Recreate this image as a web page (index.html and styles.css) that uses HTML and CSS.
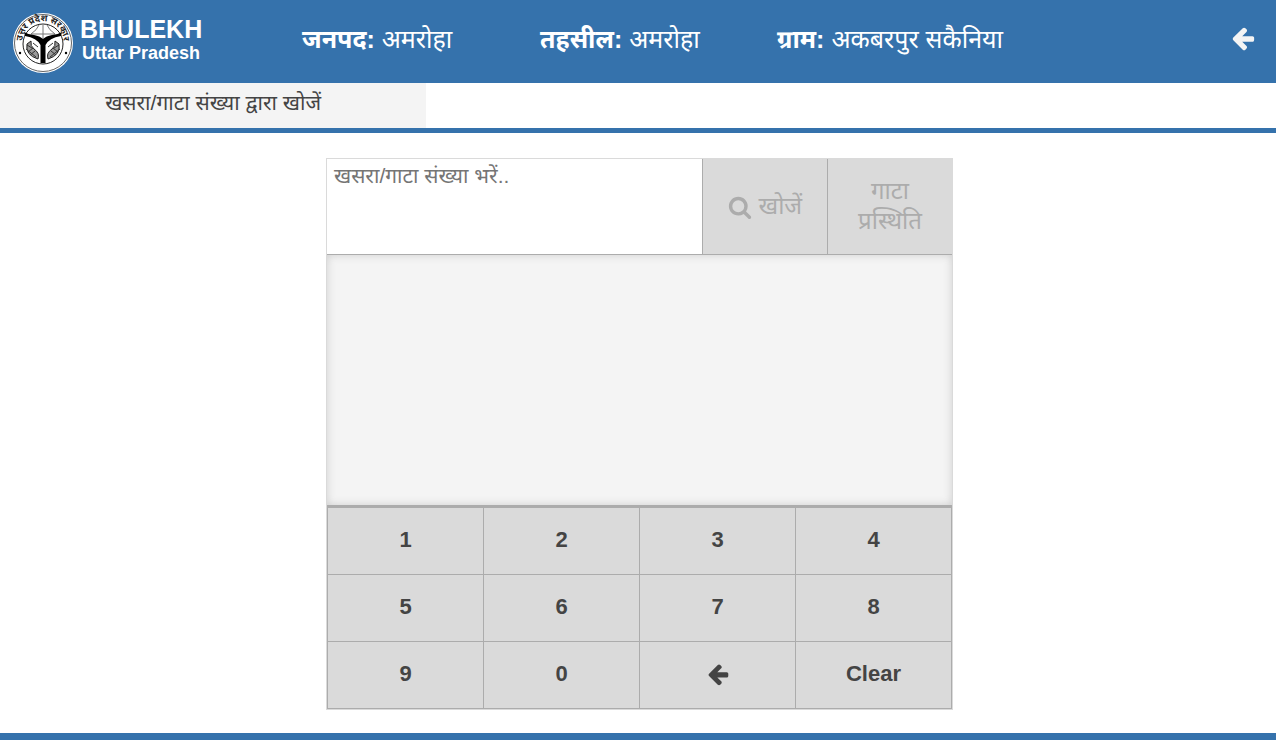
FILE: index.html
```html
<!DOCTYPE html>
<html lang="hi">
  <head>
    <meta charset="UTF-8" />
    <meta name="viewport" content="width=device-width, initial-scale=1.0" />
    <title>BHULEKH Uttar Pradesh</title>
    <link rel="stylesheet" href="styles.css">
  </head>
  <body>
    <header class="header">
      <div class="brand">
        <svg class="emblem" viewBox="0 0 60 60" aria-hidden="true">
          <defs>
            <path id="ring" d="M10.500 35A20.500 20.500 0 1 1 49.500 35" />
          </defs>
          <circle cx="30" cy="30" r="30" fill="#fff" />
          <circle cx="30" cy="30" r="28.500" fill="none" stroke="#666" stroke-width="1" />
          <text class="emblem-text"><textPath href="#ring" startOffset="50%" text-anchor="middle">उत्तर प्रदेश सरकार</textPath></text>
          <circle cx="30" cy="31" r="20" fill="none" stroke="#222" stroke-width="1" />
          <path d="M30 12v14M18 21Q24 17 26 12M42 21Q36 17 34 12M18 21h24" fill="none" stroke="#777" stroke-width="1" />
          <path d="M11 19Q16 22 21 22Q27 23 30 26Q33 23 39 22Q44 22 49 19L48 23Q36 25 32.500 32V50H27.500V32Q24 25 12 23Z" fill="#000" />
          <path d="M14 31Q12 42 25 46Q27 40 21 36Q17 33 18 28ZM46 31Q48 42 35 46Q33 40 39 36Q43 33 42 28Z" fill="#999" stroke="#222" stroke-width="1" />
          <path d="M13 36l10 8M47 36l-10 8M14 32l5 3M46 32l-5 3M17 42l5-4M43 42l-5-4M20 30l5 4M40 30l-5 4M15 39l5-4M45 39l-5-4" stroke="#333" stroke-width="1" />
          <circle cx="7" cy="40" r="1.200" />
          <circle cx="53" cy="40" r="1.200" />
        </svg>
        <div class="brand-text">
          <div class="brand-name">BHULEKH</div>
          <div class="brand-state">Uttar Pradesh</div>
        </div>
      </div>
      <div class="place"><b>जनपद:</b> अमरोहा</div>
      <div class="place"><b>तहसील:</b> अमरोहा</div>
      <div class="place"><b>ग्राम:</b> अकबरपुर सकैनिया</div>
      <button type="button" class="back" aria-label="Back">
        <svg class="icon icon-back" viewBox="0 0 1792 1792"><path d="M1664 896v128q0 53-32.500 90.500t-84.500 37.500h-704l293 294q38 36 38 90t-38 90l-75 76q-37 37-90 37-52 0-91-37l-651-652q-37-37-37-90 0-52 37-91l651-650q38-38 91-38 52 0 90 38l75 74q38 38 38 91t-38 91l-293 293h704q52 0 84.500 37.500t32.500 90.500z" /></svg>
      </button>
    </header>

    <nav class="tabs">
      <a class="tab" href="#search">खसरा/गाटा संख्या द्वारा खोजें</a>
    </nav>

    <main class="content">
      <form class="panel" id="search">
        <div class="search-row">
          <textarea class="search-input" aria-label="खसरा/गाटा संख्या" placeholder="खसरा/गाटा संख्या भरें.."></textarea>
          <button type="submit" class="action" disabled>
            <svg class="icon icon-search" viewBox="0 0 1792 1792"><path d="M1216 832q0-185-131.500-316.500t-316.500-131.500-316.500 131.500-131.500 316.500 131.500 316.500 316.500 131.500 316.500-131.500 131.500-316.500zm512 832q0 52-38 90t-90 38q-54 0-90-38l-343-342q-179 124-399 124-143 0-273.500-55.500t-225-150-150-225-55.500-273.500 55.500-273.500 150-225 225-150 273.500-55.500 273.500 55.500 225 150 150 225 55.500 273.500q0 220-124 399l343 343q37 37 37 90z" /></svg>
            खोजें
          </button>
          <button type="button" class="action" disabled>गाटा प्रस्थिति</button>
        </div>
        <div class="results"></div>
        <div class="keypad">
          <button type="button" class="key">1</button>
          <button type="button" class="key">2</button>
          <button type="button" class="key">3</button>
          <button type="button" class="key">4</button>
          <button type="button" class="key">5</button>
          <button type="button" class="key">6</button>
          <button type="button" class="key">7</button>
          <button type="button" class="key">8</button>
          <button type="button" class="key">9</button>
          <button type="button" class="key">0</button>
          <button type="button" class="key" aria-label="Backspace">
            <svg class="icon" viewBox="0 0 1792 1792"><path d="M1664 896v128q0 53-32.500 90.500t-84.500 37.500h-704l293 294q38 36 38 90t-38 90l-75 76q-37 37-90 37-52 0-91-37l-651-652q-37-37-37-90 0-52 37-91l651-650q38-38 91-38 52 0 90 38l75 74q38 38 38 91t-38 91l-293 293h704q52 0 84.500 37.500t32.500 90.500z" /></svg>
          </button>
          <button type="button" class="key">Clear</button>
        </div>
      </form>
    </main>

    <footer class="footer"></footer>
  </body>
</html>
```
FILE: styles.css
```css
* {
  box-sizing: border-box;
}
body {
  margin: 0;
  min-height: 100vh;
  display: flex;
  flex-direction: column;
  background-color: #fff;
  color: #444;
  font-family: "Liberation Sans", "Noto Sans Devanagari", "Noto Sans", sans-serif;
}
button, textarea {
  font-family: inherit;
  border-radius: 0;
  margin: 0;
}
.icon {
  width: 24px;
  height: 24px;
  fill: currentColor;
}
.header {
  display: grid;
  grid-template-columns: 289px 238px 237px 1fr auto;
  align-items: center;
  padding: 0 20px 0 13px;
  height: 83px;
  background-color: #3572ac;
  color: #fff;
}
.brand {
  display: flex;
  align-items: center;
  gap: 7px;
  padding-top: 2px;
}
.emblem {
  width: 60px;
  height: 60px;
}
.emblem-text {
  font-size: 9px;
  font-weight: bold;
  fill: #222;
}
.brand-text {
  text-align: center;
  font-weight: bold;
  padding-bottom: 6px;
}
.brand-name {
  font-size: 25px;
  line-height: 26px;
}
.brand-state {
  font-size: 18px;
  line-height: 22px;
}
.place {
  font-size: 25px;
  line-height: 36px;
  padding-bottom: 6px;
  white-space: nowrap;
}
.back {
  display: flex;
  padding: 0 0 8px;
  border: none;
  background: none;
  color: #f4f4f4;
  cursor: pointer;
}
.icon-back {
  width: 26px;
  height: 26px;
}
.tabs {
  display: flex;
  border-bottom: 5px solid #3572ac;
}
.tab {
  width: 33.4%;
  height: 45px;
  padding-top: 4px;
  background-color: #f4f4f4;
  color: #444;
  font-size: 21px;
  line-height: 32px;
  text-align: center;
  text-decoration: none;
}
.content {
  flex: 1;
  padding: 25px 0 23px 3px;
}
.panel {
  max-width: 627px;
  margin: 0 auto;
  border: 1px solid #dadada;
}
.search-row {
  display: grid;
  grid-template-columns: 3fr 1fr 1fr;
  height: 96px;
  border-bottom: 1px solid #acacac;
}
.search-input {
  padding: 0 7px;
  border: none;
  outline: none;
  resize: none;
  font-size: 21px;
  line-height: 34px;
}
.search-input::placeholder {
  color: #757575;
}
.action {
  padding: 0 20px 2px;
  border: none;
  border-left: 1px solid #acacac;
  background-color: #dadada;
  color: #acacac;
  font-size: 24px;
  line-height: 30px;
}
.icon-search {
  vertical-align: -5px;
}
.results {
  height: 250px;
  background-color: #f4f4f4;
  box-shadow: inset 0 0 8px #ccc;
}
.keypad {
  display: grid;
  grid-template-columns: repeat(4, 1fr);
  border-top: 3px solid #acacac;
  border-left: 1px solid #acacac;
}
.key {
  display: flex;
  justify-content: center;
  align-items: center;
  height: 67px;
  padding: 0 0 2px;
  border: none;
  border-right: 1px solid #acacac;
  border-bottom: 1px solid #acacac;
  background-color: #dadada;
  color: #444;
  font-size: 22px;
  font-weight: bold;
  cursor: pointer;
}
.footer {
  height: 7px;
  background-color: #3572ac;
}
```
